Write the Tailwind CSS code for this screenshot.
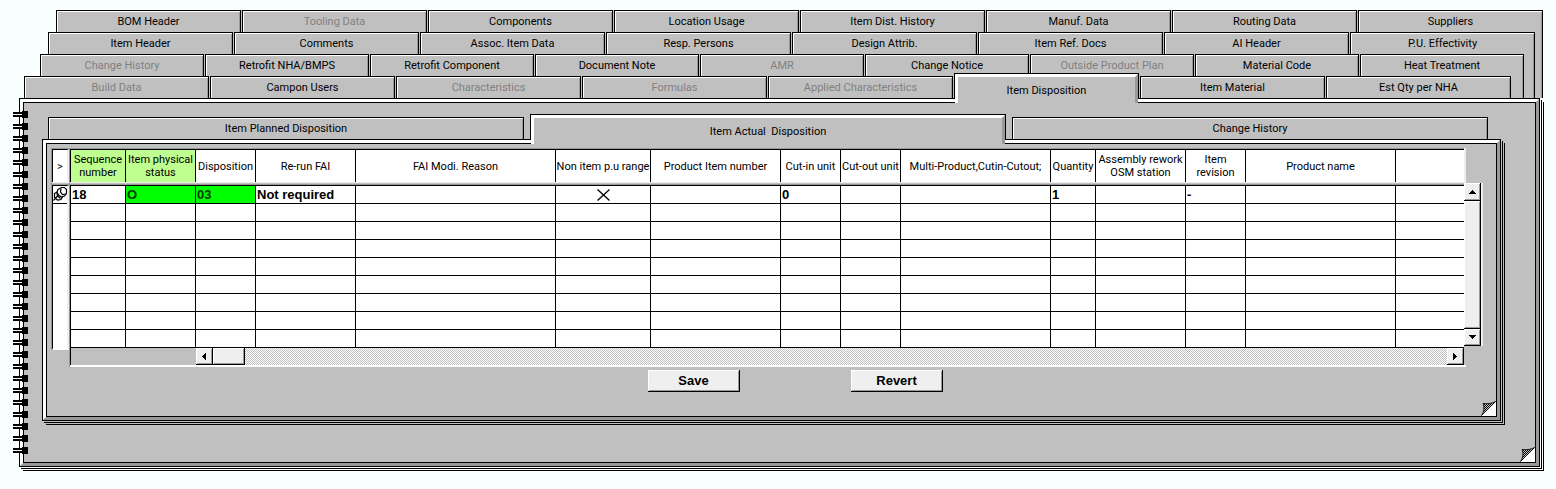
<!DOCTYPE html>
<html lang="en">
<head>
<meta charset="utf-8">
<title>Item Disposition</title>
<script src="https://cdn.jsdelivr.net/npm/@tailwindcss/browser@4"></script>
</head>
<body class="min-h-screen bg-[#f9ffff] pt-[10px] font-[Roboto,'Liberation_Sans',sans-serif] text-[11px] leading-[13px] text-black">

<!-- Main tab rows, each nested in the sheet behind it -->
<nav aria-label="Item sections" class="ml-14 mr-[13px] bg-[#c0c0c0] shadow-[inset_-1px_0_0_#000,inset_-2px_0_0_#999]">
  <div class="flex h-[22px] gap-px *:flex-1 *:border-x *:border-t *:border-black *:bg-[#c0c0c0] *:shadow-[inset_1px_1px_0_#fff,inset_-1px_0_0_#999] *:disabled:text-[#808080]">
    <button>BOM Header</button><button disabled>Tooling Data</button><button>Components</button><button>Location Usage</button><button>Item Dist. History</button><button>Manuf. Data</button><button>Routing Data</button><button>Suppliers</button>
  </div>
  <div class="-ml-2 mr-2 bg-[#c0c0c0] shadow-[inset_-1px_0_0_#000,inset_-2px_0_0_#999]">
    <div class="flex h-[22px] gap-px *:flex-1 *:border-x *:border-t *:border-black *:bg-[#c0c0c0] *:shadow-[inset_1px_1px_0_#fff,inset_-1px_0_0_#999] *:disabled:text-[#808080]">
      <button>Item Header</button><button>Comments</button><button>Assoc. Item Data</button><button>Resp. Persons</button><button>Design Attrib.</button><button>Item Ref. Docs</button><button>AI Header</button><button>P.U. Effectivity</button>
    </div>
    <div class="-ml-2 mr-[11px] bg-[#c0c0c0] shadow-[inset_-1px_0_0_#000,inset_-2px_0_0_#999]">
      <div class="flex h-[22px] gap-px *:flex-1 *:border-x *:border-t *:border-black *:bg-[#c0c0c0] *:shadow-[inset_1px_1px_0_#fff,inset_-1px_0_0_#999] *:disabled:text-[#808080]">
        <button disabled>Change History</button><button>Retrofit NHA/BMPS</button><button>Retrofit Component</button><button>Document Note</button><button disabled>AMR</button><button>Change Notice</button><button disabled>Outside Product Plan</button><button>Material Code</button><button>Heat Treatment</button>
      </div>
      <div class="-ml-4 mr-[13px] flex h-[22px] gap-px *:flex-1 *:border-x *:border-t *:border-black *:bg-[#c0c0c0] *:disabled:text-[#808080]">
        <button disabled class="shadow-[inset_1px_1px_0_#fff,inset_-1px_0_0_#999]">Build Data</button>
        <button class="shadow-[inset_1px_1px_0_#fff,inset_-1px_0_0_#999]">Campon Users</button>
        <button disabled class="shadow-[inset_1px_1px_0_#fff,inset_-1px_0_0_#999]">Characteristics</button>
        <button disabled class="shadow-[inset_1px_1px_0_#fff,inset_-1px_0_0_#999]">Formulas</button>
        <button disabled class="shadow-[inset_1px_1px_0_#fff,inset_-1px_0_0_#999]">Applied Characteristics</button>
        <button aria-current="page" class="relative z-10 -mt-[3px] -mb-px flex"><span class="-mb-1 flex flex-1 items-center justify-center self-stretch border-x-[3px] border-t-[3px] border-l-white border-t-white border-r-[#999] bg-[#c0c0c0]">Item Disposition</span></button>
        <button class="shadow-[inset_1px_1px_0_#fff,inset_-1px_0_0_#999]">Item Material</button>
        <button class="shadow-[inset_1px_1px_0_#fff,inset_-1px_0_0_#999]">Est Qty per NHA</button>
      </div>
    </div>
  </div>
</nav>

<!-- Notebook page -->
<main class="relative ml-[19px] mr-4 border border-black bg-[#c0c0c0] shadow-[1px_1px_0_#fff,2px_2px_0_#000,3px_3px_0_#fff,4px_4px_0_#000]">
  <div class="border-[3px] border-t-white border-r-[#999] border-b-[#999] border-l-white">
    <div class="relative border border-black pt-[14px] pr-[34px] pb-[41px] pl-[18px]">

      <nav aria-label="Disposition views" class="mr-[13px] ml-1.5 flex h-[22px] gap-1.5 *:flex-1 *:border-x *:border-t *:border-black *:bg-[#c0c0c0]">
        <button class="shadow-[inset_1px_1px_0_#fff,inset_-1px_0_0_#999]">Item Planned Disposition</button>
        <button aria-current="page" class="relative z-10 -mt-[3px] -mb-px flex"><span class="-mb-1 flex flex-1 items-center justify-center self-stretch border-x-[3px] border-t-[3px] border-l-white border-t-white border-r-[#999] bg-[#c0c0c0] whitespace-pre">Item Actual  Disposition</span></button>
        <button class="shadow-[inset_1px_1px_0_#fff,inset_-1px_0_0_#999]">Change History</button>
      </nav>

      <section class="border border-black bg-[#c0c0c0] shadow-[1px_1px_0_#c0c0c0,2px_2px_0_#000,3px_3px_0_#c0c0c0,4px_4px_0_#000]">
        <div class="border-[3px] border-t-white border-r-[#999] border-b-[#999] border-l-white">
          <div class="relative border border-black pt-1 pr-3 pb-6 pl-1">

            <div class="flex items-start">
              <!-- Row markers -->
              <div class="w-[18px] border-t border-l border-[#999]">
                <div class="flex h-[33px] items-center justify-center border-t border-r-2 border-l border-t-black border-r-[#efefef] border-l-black bg-white">&gt;</div>
                <div class="h-[3px] border-t border-b border-t-[#efefef] border-b-[#999]"></div>
                <div class="border-t border-r-2 border-b-2 border-l border-t-black border-r-[#efefef] border-b-white border-l-black bg-white">
                  <div class="h-[18px] border-b border-black">
                    <svg viewBox="0 0 14 17" class="h-[17px] w-[14px]" fill="none" stroke="#000" stroke-width="1.2" aria-label="Current row">
                      <path d="M5 3.500 8.500 1.500h3l2 2v4l-2 2.500-3 1-3-2-1.500-3z" fill="#fff"/>
                      <path d="M8 2.500 7.500 6l2 2.500 3.500-.5M4 6 1.500 7.500v4l3 2.500 3.500-.5 1.500-2.500M4 7l.5 3 3 2.500M4.500 10 .5 14.500"/>
                    </svg>
                  </div>
                  <div class="h-[144px]"></div>
                </div>
              </div>

              <!-- Disposition records -->
              <div class="min-w-0 flex-1 border-t border-l border-[#999]">
                <table class="w-full table-fixed border-separate border-spacing-0 border-b border-black">
                  <colgroup><col class="w-[55px]"><col class="w-[70px]"><col class="w-[60px]"><col class="w-[100px]"><col class="w-[200px]"><col class="w-[95px]"><col class="w-[130px]"><col class="w-[60px]"><col class="w-[60px]"><col class="w-[150px]"><col class="w-[45px]"><col class="w-[90px]"><col class="w-[60px]"><col class="w-[150px]"><col></colgroup>
                  <thead>
                    <tr class="h-[33px] bg-white *:border-t *:border-l *:border-black *:p-0 *:font-normal">
                      <th class="bg-[#bfff8f]">Sequence number</th><th class="bg-[#bfff8f]">Item physical status</th><th>Disposition</th><th>Re-run FAI</th><th>FAI Modi. Reason</th><th class="whitespace-nowrap">Non item p.u range</th><th>Product Item number</th><th class="whitespace-nowrap">Cut-in unit</th><th class="whitespace-nowrap">Cut-out unit</th><th class="whitespace-nowrap">Multi-Product,Cutin-Cutout;</th><th>Quantity</th><th>Assembly rework<br>OSM station</th><th>Item revision</th><th>Product name</th><th></th>
                    </tr>
                    <tr aria-hidden="true"><td colspan="15" class="h-[3px] border-t border-b border-t-[#efefef] border-b-[#999] p-0"></td></tr>
                  </thead>
                  <tbody class="bg-white text-[13px] font-bold font-['Liberation_Sans',sans-serif]">
                    <tr class="h-[18px] *:border-t *:border-l *:border-black *:p-0 *:pl-px">
                      <td>18</td><td class="bg-[#0f0] text-[#003800]">O</td><td class="bg-[#0f0] text-[#003800]">03</td><td>Not required</td><td></td>
                      <td><svg viewBox="0 0 13 12" class="mx-auto h-3 w-[13px]" stroke="#000" stroke-width="1.300" aria-label="Checked"><path d="M.5.5l12 11M12.500.5l-12 11"/></svg></td>
                      <td></td><td>0</td><td></td><td></td><td>1</td><td></td><td>-</td><td></td><td></td>
                    </tr>
                    <tr class="h-[18px] *:border-t *:border-l *:border-black *:p-0"><td></td><td></td><td></td><td></td><td></td><td></td><td></td><td></td><td></td><td></td><td></td><td></td><td></td><td></td><td></td></tr>
                    <tr class="h-[18px] *:border-t *:border-l *:border-black *:p-0"><td></td><td></td><td></td><td></td><td></td><td></td><td></td><td></td><td></td><td></td><td></td><td></td><td></td><td></td><td></td></tr>
                    <tr class="h-[18px] *:border-t *:border-l *:border-black *:p-0"><td></td><td></td><td></td><td></td><td></td><td></td><td></td><td></td><td></td><td></td><td></td><td></td><td></td><td></td><td></td></tr>
                    <tr class="h-[18px] *:border-t *:border-l *:border-black *:p-0"><td></td><td></td><td></td><td></td><td></td><td></td><td></td><td></td><td></td><td></td><td></td><td></td><td></td><td></td><td></td></tr>
                    <tr class="h-[18px] *:border-t *:border-l *:border-black *:p-0"><td></td><td></td><td></td><td></td><td></td><td></td><td></td><td></td><td></td><td></td><td></td><td></td><td></td><td></td><td></td></tr>
                    <tr class="h-[18px] *:border-t *:border-l *:border-black *:p-0"><td></td><td></td><td></td><td></td><td></td><td></td><td></td><td></td><td></td><td></td><td></td><td></td><td></td><td></td><td></td></tr>
                    <tr class="h-[18px] *:border-t *:border-l *:border-black *:p-0"><td></td><td></td><td></td><td></td><td></td><td></td><td></td><td></td><td></td><td></td><td></td><td></td><td></td><td></td><td></td></tr>
                    <tr class="h-[18px] *:border-t *:border-l *:border-black *:p-0"><td></td><td></td><td></td><td></td><td></td><td></td><td></td><td></td><td></td><td></td><td></td><td></td><td></td><td></td><td></td></tr>
                  </tbody>
                </table>
                <!-- Horizontal scroll bar -->
                <div class="flex h-[17px] border-l border-black">
                  <div class="w-[125px]"></div>
                  <button aria-label="Scroll left" class="flex w-[17px] items-center justify-center border-r border-b border-black bg-[#efefef] shadow-[inset_1px_1px_0_#fff,inset_-1px_-1px_0_#999]"><svg viewBox="0 0 4 7" class="h-[7px] w-1" shape-rendering="crispEdges"><path d="M4 0v7L0 3.500z"/></svg></button>
                  <div class="w-8 border-r border-b border-black bg-[#efefef] shadow-[inset_1px_1px_0_#fff,inset_-1px_-1px_0_#999]"></div>
                  <div class="flex-1 bg-[repeating-conic-gradient(#c0c0c0_0_25%,#fff_0_50%)] bg-size-[2px_2px]"></div>
                  <button aria-label="Scroll right" class="flex w-[17px] items-center justify-center border-r border-b border-black bg-[#efefef] shadow-[inset_1px_1px_0_#fff,inset_-1px_-1px_0_#999]"><svg viewBox="0 0 4 7" class="h-[7px] w-1" shape-rendering="crispEdges"><path d="M0 0v7L4 3.500z"/></svg></button>
                </div>
                <div class="-mr-0.5 h-0.5 bg-white"></div>
              </div>

              <!-- Vertical scroll bar -->
              <div class="w-5">
                <div class="h-[35px] w-0.5 bg-[#efefef]"></div>
                <div class="mr-px flex h-[163px] flex-col border-r-2 border-[#efefef]">
                  <button aria-label="Scroll up" class="flex h-[18px] items-center justify-center border-r border-b border-black bg-[#efefef] shadow-[inset_1px_1px_0_#fff,inset_-1px_-1px_0_#999]"><svg viewBox="0 0 7 4" class="h-1 w-[7px]" shape-rendering="crispEdges"><path d="M0 4h7L3.500 0z"/></svg></button>
                  <div class="flex-1 border-r border-b border-black bg-[#efefef] shadow-[inset_1px_1px_0_#fff,inset_-1px_-1px_0_#999]"></div>
                  <button aria-label="Scroll down" class="flex h-[17px] items-center justify-center border-r border-b border-black bg-[#efefef] shadow-[inset_1px_1px_0_#fff,inset_-1px_-1px_0_#999]"><svg viewBox="0 0 7 4" class="h-1 w-[7px]" shape-rendering="crispEdges"><path d="M0 0h7L3.500 4z"/></svg></button>
                </div>
              </div>
            </div>

            <div class="mt-[3px] flex justify-center gap-[111px] pl-14 text-[13px] font-['Liberation_Sans',sans-serif] font-bold *:h-[22px] *:w-[92px] *:border-r *:border-b *:border-black *:bg-[#efefef] *:shadow-[inset_1px_1px_0_#fff,inset_-1px_-1px_0_#999]">
              <button>Save</button><button>Revert</button>
            </div>

            <svg viewBox="0 0 15 15" class="absolute right-0 bottom-0 size-[15px]" aria-hidden="true">
              <defs><pattern id="dither" width="2" height="2" patternUnits="userSpaceOnUse"><path fill="#c0c0c0" d="M0 0h2v2H0z"/><path d="M0 0h1v1H0zM1 1h1v1H1z"/></pattern></defs>
              <path d="M15 1v14H0z" fill="#fff"/>
              <path d="M2 2.500C7 3 11 2.500 14.500.5L.5 14.500C3 11 3.500 6 2 2.500z" fill="url(#dither)" stroke="#000" stroke-width=".8"/>
            </svg>
          </div>
        </div>
      </section>

      <svg viewBox="0 0 15 15" class="absolute right-0 bottom-0 size-[15px]" aria-hidden="true">
        <path d="M15 1v14H0z" fill="#fff"/>
        <path d="M2 2.500C7 3 11 2.500 14.500.5L.5 14.500C3 11 3.500 6 2 2.500z" fill="url(#dither)" stroke="#000" stroke-width=".8"/>
      </svg>
    </div>
  </div>

  <!-- Spiral binding -->
  <svg class="absolute top-3 -left-[7px] h-[calc(100%-24px)] w-[15px]" shape-rendering="crispEdges" aria-hidden="true">
    <defs><pattern id="ring" width="15" height="12" patternUnits="userSpaceOnUse"><path fill="#fff" d="M0 3h9v1H0z"/><path d="M9 0h6v7H9zM0 1h9v2H0zM0 4h9v2H0z"/></pattern></defs>
    <rect width="15" height="100%" fill="url(#ring)"/>
  </svg>
</main>
</body>
</html>
